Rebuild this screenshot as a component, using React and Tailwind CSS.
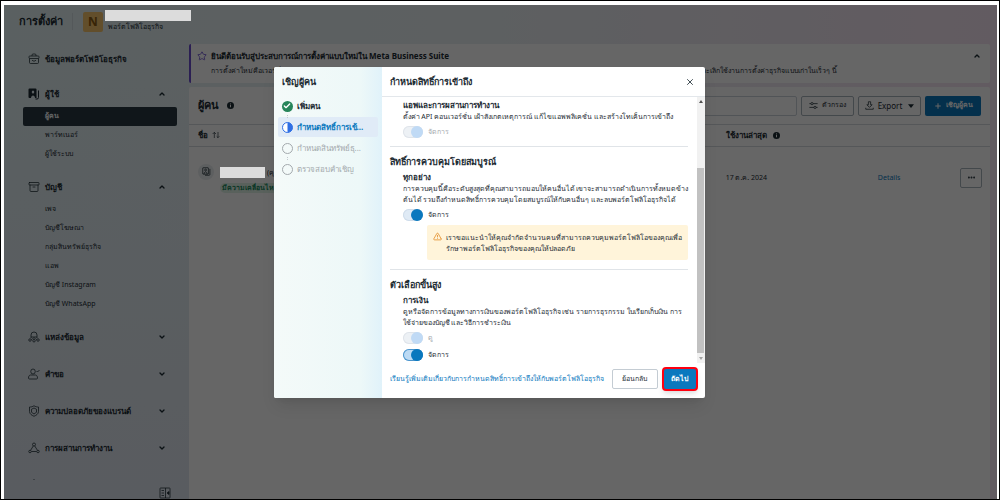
import React from 'react';
import {
  Archive,
  Check,
  ChevronDown,
  ChevronUp,
  Ellipsis,
  Plus,
  Star,
  TriangleAlert,
  X,
} from 'lucide-react';

const sections = [
  {
    label: 'ผู้ใช้',
    icon: PeopleIcon,
    items: ['ผู้คน', 'พาร์ทเนอร์', 'ผู้ใช้ระบบ'],
  },
  {
    label: 'บัญชี',
    icon: Archive,
    items: ['เพจ', 'บัญชีโฆษณา', 'กลุ่มสินทรัพย์ธุรกิจ', 'แอพ', 'บัญชี Instagram', 'บัญชี WhatsApp'],
  },
  { label: 'แหล่งข้อมูล', icon: SourceIcon },
  { label: 'คำขอ', icon: RequestIcon },
  { label: 'ความปลอดภัยของแบรนด์', icon: BrandIcon },
  { label: 'การผสานการทำงาน', icon: NodesIcon },
];

function BriefcaseIcon({ className }) {
  return (
    <svg viewBox="0 0 24 24" fill="none" stroke="currentColor" strokeWidth="1.5" className={className}>
      <path d="M8 6V4a2 2 0 0 1 2-2h4a2 2 0 0 1 2 2v2" />
      <rect x="2" y="6" width="20" height="5" rx="1.500" />
      <path d="M3 11v8a2 2 0 0 0 2 2h14a2 2 0 0 0 2-2v-8M8 14l2 2h4l2-2" />
    </svg>
  );
}

function PeopleIcon({ className }) {
  return (
    <svg viewBox="0 0 24 24" className={className}>
      <path fill="currentColor" fillRule="evenodd" d="M3 1h12a2 2 0 0 1 2 2v17h-3c0-7-8-7-8 0H3a2 2 0 0 1-2-2V3a2 2 0 0 1 2-2zM10 5a2.500 3 0 1 0 0 6 2.500 3 0 0 0 0-6z" />
      <path fill="none" stroke="currentColor" strokeWidth="2" d="M21 5v14a3 3 0 0 1-3 3h-3" />
    </svg>
  );
}

function PersonCardIcon({ className }) {
  return (
    <svg viewBox="0 0 24 24" fill="none" stroke="currentColor" strokeWidth="2" className={className}>
      <rect x="2" y="2" width="15" height="17" rx="1" />
      <circle cx="9.500" cy="8" r="2.500" />
      <path d="M5.500 19c0-8 8-8 8 0M21 5v15a2 2 0 0 1-2 2H8" />
    </svg>
  );
}

function SourceIcon({ className }) {
  return (
    <svg viewBox="0 0 24 24" fill="none" stroke="currentColor" strokeWidth="1.5" className={className}>
      <path d="M6 14V8a6 6 0 0 1 12 0v6M6 12h12M12 12v5" />
      <circle cx="4" cy="18" r="2.500" />
      <circle cx="12" cy="19.500" r="2.500" />
      <circle cx="20" cy="18" r="2.500" />
      <path d="M6.500 17 9.500 15M17.500 17l-3-2" />
    </svg>
  );
}

function RequestIcon({ className }) {
  return (
    <svg viewBox="0 0 24 24" fill="none" stroke="currentColor" strokeWidth="1.5" className={className}>
      <ellipse cx="10" cy="7" rx="4.500" ry="5" />
      <path d="M5 14h10c2.500 0 4 3 4 6 0 1-.5 2-2 2H3c-1.500 0-2-1-2-2 0-3 1.500-6 4-6zM17 6l2 2 4-4" />
    </svg>
  );
}

function BrandIcon({ className }) {
  return (
    <svg viewBox="0 0 24 24" fill="none" stroke="currentColor" strokeWidth="1.5" className={className}>
      <path d="M12 1.500c3 2 6 2.500 9 2.500v9c0 5-5 8-9 9.500C8 21 3 18 3 13V4c3 0 6-.5 9-2.500z" />
      <path d="m12 6 5 2.500v6L12 18l-5-3.500v-6z" />
    </svg>
  );
}

function NodesIcon({ className }) {
  return (
    <svg viewBox="0 0 24 24" fill="none" stroke="currentColor" strokeWidth="1.5" className={className}>
      <circle cx="12" cy="5" r="3" />
      <circle cx="4" cy="19" r="2.500" />
      <circle cx="20" cy="19" r="2.500" />
      <path d="M10.500 8 5.500 16M13.500 8l5 8M7 19h10" />
    </svg>
  );
}

function FilterIcon({ className }) {
  return (
    <svg viewBox="0 0 24 24" fill="none" stroke="currentColor" strokeWidth="2" className={className}>
      <path d="M1 7h4M11 7h12M1 17h12M19 17h4" />
      <circle cx="8" cy="7" r="3" />
      <circle cx="16" cy="17" r="3" />
    </svg>
  );
}

function ExportIcon({ className }) {
  return (
    <svg viewBox="0 0 24 24" fill="none" stroke="currentColor" strokeWidth="2" className={className}>
      <path d="M9 2h6v8h4l-7 7-7-7h4zM2 18v4h20v-4" />
    </svg>
  );
}

function SortIcon({ className }) {
  return (
    <svg viewBox="0 0 24 24" fill="none" stroke="currentColor" strokeWidth="2" className={className}>
      <path d="M7 21V4M2 9l5-5 5 5M18 3v17M14 16l4 4 4-4" />
    </svg>
  );
}

function InfoIcon() {
  return (
    <svg viewBox="0 0 12 12" className="size-[7px] shrink-0">
      <circle cx="6" cy="6" r="6" fill="#1c2b33" />
      <path d="M6 5v4M6 2.500v1.500" stroke="#fff" strokeWidth="1.700" />
    </svg>
  );
}

const Sidebar = () => (
  <nav className="flex w-[185px] shrink-0 flex-col bg-linear-to-b from-transparent to-[#dfe6f0]">
    <div className="flex min-h-0 flex-1 flex-col overflow-hidden pt-[9px] pr-3 pl-[19px]">
      <a href="#info" className="mb-[9px] flex h-6 shrink-0 items-center gap-[5px] pl-[5px] text-[8px] font-bold">
        <BriefcaseIcon className="size-3" />
        ข้อมูลพอร์ตโฟลิโอธุรกิจ
      </a>
      {sections.map(({ label, icon: Icon, items }) => (
        <div key={label} className={items ? 'mb-[9px] shrink-0' : 'mb-[10px] shrink-0'}>
          <button className="flex h-[27px] w-full items-center gap-[5px] pr-[11px] pl-[5px] text-left text-[8px] font-bold">
            <Icon className="size-3" strokeWidth={1.5} />
            <span className="flex-1">{label}</span>
            {items ? <ChevronUp className="size-2" strokeWidth={4} /> : <ChevronDown className="size-2" strokeWidth={4} />}
          </button>
          {items &&
            items.map((item) => (
              <a
                key={item}
                href="#item"
                className={
                  item === 'ผู้คน'
                    ? 'flex h-[19px] items-center rounded-xs bg-[#283943] pl-[22px] text-[7px] font-bold text-white'
                    : 'flex h-[19px] items-center pl-[22px] text-[7px]'
                }
              >
                {item}
              </a>
            ))}
        </div>
      ))}
      <button className="flex h-[27px] w-full shrink-0 items-center gap-[5px] pl-[5px] text-left text-[8px] font-bold whitespace-nowrap">
        <BrandIcon className="size-3" />
        การเรียกเก็บเงินและการชำระเงิน
      </button>
    </div>
    <div className="flex h-[19px] shrink-0 items-end justify-end pr-[18px]">
      <button aria-label="ย่อเมนู">
        <svg viewBox="0 0 24 24" fill="none" stroke="currentColor" strokeWidth="1.500" className="size-3">
          <rect x="2" y="2" width="20" height="20" rx="1" />
          <path d="M13 2v20M5 7h5M5 12h5M5 17h5" />
          <path d="m20 9-4 3 4 3z" fill="currentColor" />
        </svg>
      </button>
    </div>
  </nav>
);

const Banner = () => (
  <section className="flex h-[39px] shrink-0 flex-col justify-center gap-[3px] rounded-xs border-l-2 border-[#6b4fd0] bg-white pr-[9px] pl-[6px]">
    <div className="flex items-center gap-1">
      <Star className="size-[10px] text-[#6b4fd0]" strokeWidth={2} />
      <h2 className="flex-1 text-[8px] leading-3 font-bold">
        ยินดีต้อนรับสู่ประสบการณ์การตั้งค่าแบบใหม่ใน Meta Business Suite
      </h2>
      <ChevronUp className="size-2" strokeWidth={4} />
    </div>
    <div className="flex justify-between pr-[144px] pl-[14px] text-[7px] leading-3 whitespace-nowrap">
      <span>การตั้งค่าใหม่คือเวอร์ชั่นปรับปรุง</span>
      <span>เราจะเลิกใช้งานการตั้งค่าธุรกิจแบบเก่าในเร็วๆ นี้</span>
    </div>
  </section>
);

const People = () => (
  <section className="flex-1 rounded-t-xs bg-white">
    <div className="flex h-[38px] items-center gap-1 border-b border-[#d5dade] pr-[9px] pl-[9px] text-[7px]">
      <h1 className="mr-1 text-[11px] font-bold">ผู้คน</h1>
      <InfoIcon />
      <input aria-label="ค้นหา" className="ml-auto h-5 w-[400px] rounded-xs border border-[#cbd2d9]" />
      <button className="flex h-5 w-[53px] items-center justify-center gap-1 rounded-xs border border-[#a9b4bc]">
        <FilterIcon className="size-[9px]" />
        ตัวกรอง
      </button>
      <button className="flex h-5 w-[63px] items-center justify-center gap-1 rounded-xs border border-[#a9b4bc] text-[8px]">
        <ExportIcon className="size-[9px]" />
        Export
        <svg viewBox="0 0 8 5" className="ml-[2px] h-1 w-[6px]">
          <path d="M0 0h8L4 5z" fill="#1c2b33" />
        </svg>
      </button>
      <button className="flex h-5 w-14 items-center justify-center gap-1 rounded-xs bg-[#0a78be] font-bold text-white">
        <Plus className="size-2" strokeWidth={3} />
        เชิญผู้คน
      </button>
    </div>
    <table className="w-full table-fixed text-left text-[7px]">
      <thead>
        <tr className="h-[21px] border-b border-[#d5dade] text-[8px]">
          <th className="w-[67%] pl-[9px] font-bold">
            <span className="flex items-center gap-1">
              ชื่อ <SortIcon className="size-2" />
            </span>
          </th>
          <th className="w-[19%] font-bold">
            <span className="flex items-center gap-[6px]">
              ใช้งานล่าสุด <InfoIcon />
            </span>
          </th>
          <th />
          <th className="w-[30px]" />
        </tr>
      </thead>
      <tbody>
        <tr className="h-[63px]">
          <td className="pl-[9px]">
            <div className="flex items-center gap-[6px]">
              <span className="mb-3 flex size-4 items-center justify-center rounded-full bg-[#e9edf0]">
                <PersonCardIcon className="size-[9px]" />
              </span>
              <div className="flex flex-col items-start gap-1 pt-1">
                <div className="flex items-center gap-[2px]">
                  <span className="relative z-20 h-[11px] w-[45px] bg-[#dcdcdc]" />
                  <span className="leading-3">(คุณ)</span>
                </div>
                <span className="rounded-full bg-[#dff2e7] px-[2px] leading-[10px] font-bold text-[#1c8a60]">
                  มีความเคลื่อนไหว
                </span>
              </div>
            </div>
          </td>
          <td>17 ต.ค. 2024</td>
          <td>
            <a href="#details" className="text-[#0a78be]">Details</a>
          </td>
          <td>
            <button aria-label="เพิ่มเติม" className="flex h-5 w-[22px] items-center justify-center rounded-xs border border-[#a9b4bc]">
              <Ellipsis className="size-[9px]" strokeWidth={3} />
            </button>
          </td>
        </tr>
      </tbody>
    </table>
  </section>
);

const Toggle = ({ label, disabled, focused }) => (
  <label className={disabled ? 'flex h-[17px] items-center gap-[5px] text-[#a3a9ad]' : 'flex h-[17px] items-center gap-[5px]'}>
    <input type="checkbox" defaultChecked disabled={disabled} className="peer sr-only" />
    <span
      className={
        disabled
          ? 'flex h-3 w-5 justify-end rounded-full bg-[#edf1f5] ring-1 ring-[#dfe4ea] ring-inset'
          : focused
            ? 'flex h-3 w-5 justify-end rounded-full bg-[#bcdaf4] ring-1 ring-[#4a94cc] ring-inset'
            : 'flex h-3 w-5 justify-end rounded-full bg-[#dfeaf5] ring-1 ring-[#cfdcea] ring-inset'
      }
    >
      <span className={disabled ? 'size-3 rounded-full bg-[#c0daf5]' : 'size-3 rounded-full bg-[#0a78be]'} />
    </span>
    {label}
  </label>
);

const StepDots = () => (
  <span className="absolute -bottom-[2px] left-[9px] flex flex-col gap-px">
    <span className="size-px bg-[#c3cacf]" />
    <span className="size-px bg-[#c3cacf]" />
  </span>
);

const Steps = () => (
  <aside className="flex w-[108px] shrink-0 flex-col bg-linear-to-r from-[#f4faf9] via-[#edf8f8] via-80% to-[#e0f2fa] px-1">
    <h2 className="flex h-[29px] items-center pl-1 text-[9px] font-bold">เชิญผู้คน</h2>
    <ol className="flex flex-col gap-[1px] text-[8px]">
      <li className="relative flex h-5 items-center gap-1 pl-1 font-bold">
        <span className="flex size-[11px] items-center justify-center rounded-full bg-[#27855a]">
          <Check className="size-2 text-white" strokeWidth={4} />
        </span>
        เพิ่มคน
        <StepDots />
      </li>
      <li className="flex h-5 items-center gap-1 rounded-xs bg-[#e0ebf7] pl-1 font-bold text-[#0a78be]">
        <svg viewBox="0 0 22 22" className="size-[11px] shrink-0">
          <circle cx="11" cy="11" r="10" fill="#fff" stroke="#2f6fe4" strokeWidth="2" />
          <path d="M11 1a10 10 0 0 1 0 20z" fill="#2f6fe4" />
        </svg>
        กำหนดสิทธิ์การเข้...
      </li>
      <li className="relative flex h-5 items-center gap-1 pl-1 text-[#a3a9ad]">
        <span className="size-[11px] shrink-0 rounded-full border border-[#a3a9ad]" />
        กำหนดสินทรัพย์ธุ...
        <StepDots />
      </li>
      <li className="flex h-5 items-center gap-1 pl-1 text-[#a3a9ad]">
        <span className="size-[11px] shrink-0 rounded-full border border-[#a3a9ad]" />
        ตรวจสอบคำเชิญ
      </li>
    </ol>
  </aside>
);

const InviteDialog = () => (
  <div role="dialog" className="flex w-[431px] overflow-hidden rounded-xs bg-white shadow-lg">
    <Steps />
    <div className="flex min-w-0 flex-1 flex-col">
      <header className="flex h-[30px] items-center justify-between border-b border-[#e3e7eb] pr-[10px] pl-2">
        <h2 className="text-[9px] font-bold">กำหนดสิทธิ์การเข้าถึง</h2>
        <button aria-label="ปิด">
          <X className="size-[10px]" strokeWidth={2} />
        </button>
      </header>
      <div className="flex">
        <div className="min-w-0 flex-1 pr-[9px] pl-2 text-[7px] leading-[11px] whitespace-nowrap">
          <div className="border-b border-[#e0e4e8] pt-[2px] pb-[6px] pl-[13px]">
            <h4 className="text-[8px] leading-3 font-bold">แอพและการผสานการทำงาน</h4>
            <p className="mb-px">ตั้งค่า API คอนเวอร์ชั่น เฝ้าสังเกตเหตุการณ์ แก้ไขแอพพลิเคชั่น และสร้างโทเค็นการเข้าถึง</p>
            <Toggle label="จัดการ" disabled />
          </div>
          <h3 className="pt-[9px] text-[9px] leading-3 font-bold">สิทธิ์การควบคุมโดยสมบูรณ์</h3>
          <div className="border-b border-[#e0e4e8] pt-[3px] pb-[9px] pl-[13px]">
            <h4 className="text-[8px] leading-3 font-bold">ทุกอย่าง</h4>
            <p className="mb-px">
              การควบคุมนี้คือระดับสูงสุดที่คุณสามารถมอบให้คนอื่นได้ เขาจะสามารถดำเนินการทั้งหมดข้าง
              <br />
              ต้นได้ รวมถึงกำหนดสิทธิ์การควบคุมโดยสมบูรณ์ให้กับคนอื่นๆ และลบพอร์ตโฟลิโอธุรกิจได้
            </p>
            <Toggle label="จัดการ" />
            <div className="mt-[2px] ml-6 flex gap-1 rounded-xs bg-[#fff4da] px-[6px] pt-[7px] pb-[6px]">
              <TriangleAlert className="size-[9px] shrink-0 text-[#e0851b]" />
              <p>
                เราขอแนะนำให้คุณจำกัดจำนวนคนที่สามารถควบคุมพอร์ตโฟลิโอของคุณเพื่อ
                <br />
                รักษาพอร์ตโฟลิโอธุรกิจของคุณให้ปลอดภัย
              </p>
            </div>
          </div>
          <h3 className="pt-[9px] text-[9px] leading-3 font-bold">ตัวเลือกขั้นสูง</h3>
          <div className="pt-[3px] pl-[13px]">
            <h4 className="text-[8px] leading-3 font-bold">การเงิน</h4>
            <p className="mb-px">
              ดูหรือจัดการข้อมูลทางการเงินของพอร์ตโฟลิโอธุรกิจ เช่น รายการธุรกรรม ใบเรียกเก็บเงิน การ
              <br />
              ใช้จ่ายของบัญชี และวิธีการชำระเงิน
            </p>
            <Toggle label="ดู" disabled />
            <Toggle label="จัดการ" focused />
          </div>
        </div>
        <div className="flex w-2 flex-col items-center bg-[#f1f1f1] py-[3px]">
          <svg viewBox="0 0 4 3" className="h-[3px] w-1">
            <path d="M0 3h4L2 0z" fill="#505050" />
          </svg>
          <div className="flex-[66]" />
          <div className="w-[7px] flex-[188] bg-[#c1c1c1]" />
          <div className="flex-[4]" />
          <svg viewBox="0 0 4 3" className="h-[3px] w-1">
            <path d="M0 0h4L2 3z" fill="#a3a3a3" />
          </svg>
        </div>
      </div>
      <footer className="flex h-[35px] items-center justify-between pr-[7px] pb-[3px] pl-2 text-[7px]">
        <a href="#learn" className="text-[#0a78be]">เรียนรู้เพิ่มเติมเกี่ยวกับการกำหนดสิทธิ์การเข้าถึงให้กับพอร์ตโฟลิโอธุรกิจ</a>
        <div className="flex items-center gap-1">
          <button className="h-5 w-[46px] rounded-xs border border-[#c4ccd3]">ย้อนกลับ</button>
          <button className="h-6 w-9 rounded-sm border-2 border-[#ff0010] bg-[#0a78be] font-bold text-white shadow-md">ถัดไป</button>
        </div>
      </footer>
    </div>
  </div>
);

export default function App() {
  return (
    <div className="h-screen border border-black bg-white pt-1 pr-[2px] pl-[3px] font-['Noto_Sans','Liberation_Sans',sans-serif] text-[#1c2b33]">
      <div className="relative flex h-full flex-col overflow-hidden bg-linear-to-r from-[#e2f1f3] via-[#e9eff3] to-[#f6e4f2]">
        <header className="flex h-[33px] shrink-0 items-center pl-[15px]">
          <h1 className="w-[54px] border-r border-[#d3dde0] text-[11px] font-bold">การตั้งค่า</h1>
          <div className="ml-[10px] flex items-center gap-[2px]">
            <span className="flex size-5 items-center justify-center rounded-xs bg-[#f5c46b] text-[12px] font-bold text-[#8a5a10]">N</span>
            <div className="text-[7px] leading-3">
              <div className="relative z-20 h-[11px] w-[86px] bg-[#dcdcdc]" />
              <p className="pl-[3px]">พอร์ตโฟลิโอธุรกิจ</p>
            </div>
          </div>
        </header>
        <div className="flex min-h-0 flex-1">
          <Sidebar />
          <main className="flex min-w-0 flex-1 flex-col gap-1 pt-[6px] pr-[7px]">
            <Banner />
            <People />
          </main>
        </div>
        <div className="absolute inset-0 z-10 flex items-start justify-center bg-black/60 pt-[62px] pr-[23px]">
          <InviteDialog />
        </div>
      </div>
    </div>
  );
}
